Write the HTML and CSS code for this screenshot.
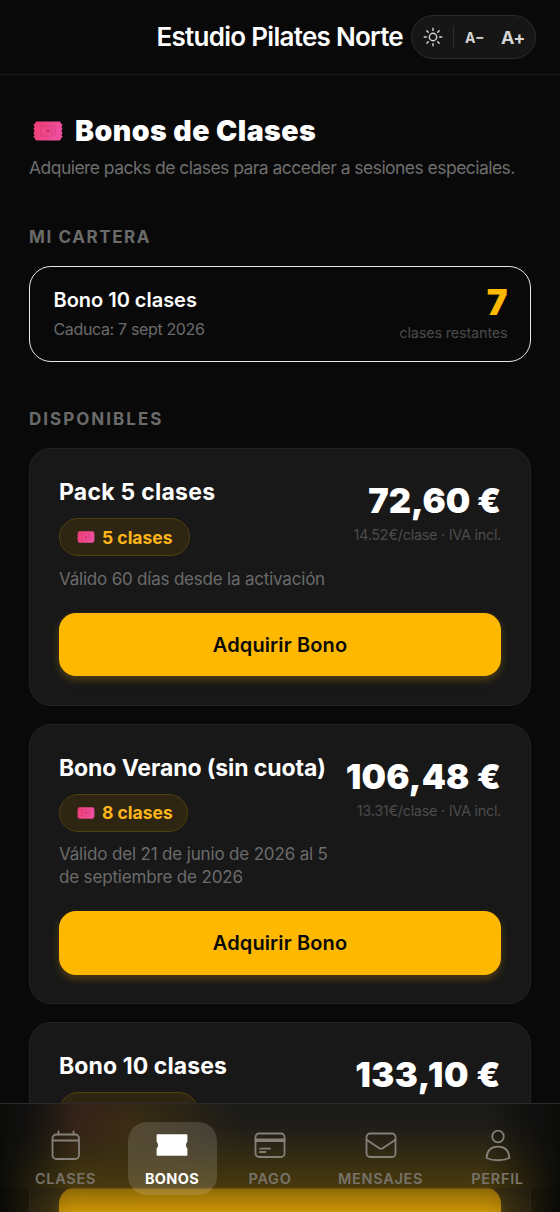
FILE: index.html
```html
<!DOCTYPE html>
<html lang="es">
<head>
<meta charset="utf-8">
<title>Bonos de Clases</title>
<link rel="stylesheet" href="styles.css">
</head>
<body>
<svg class="defs" width="0" height="0">
  <defs>
    <linearGradient id="pink" x1="0" y1="0" x2="1" y2="0.3"><stop offset="0" stop-color="#ee3d70"/><stop offset="1" stop-color="#f050a0"/></linearGradient>
    <symbol id="ticket" viewBox="0 0 30 20">
      <path fill="url(#pink)" d="M3 0.5H27L28 2.5L29.5 3.5L28.5 6L29.5 7.5L28.5 10L29.5 12L28.5 14L29.5 16L28 17.5L27 19.5H3L2 17.5L.5 16L1.5 14L.5 12L1.5 10L.5 7.5L1.5 6L.5 3.5L2 2.5Z"/>
      <path fill="none" stroke="#b92d68" stroke-opacity=".4" stroke-width=".8" d="M8 5H19V15H8ZM22 5V15"/>
      <circle cx="15" cy="10" r="1.5" fill="#a92759" fill-opacity=".7"/>
    </symbol>
  </defs>
</svg>
<div class="screen">
  <header class="topbar">
    <div class="brand"><span>Estudio Pilates Norte</span></div>
    <div class="controls">
      <svg class="sun" viewBox="0 0 20 20"><circle cx="10" cy="10" r="3.7"/><path d="M10 1.2V3.4M10 16.6V18.8M1.2 10H3.4M16.6 10H18.8M3.8 3.8L5.3 5.3M14.7 14.7L16.2 16.2M3.8 16.2L5.3 14.7M14.7 5.3L16.2 3.8"/></svg>
      <i class="divider"></i>
      <span class="smaller">A−</span>
      <span class="larger">A+</span>
    </div>
  </header>
  <main>
    <h1><svg class="ticket-lg"><use href="#ticket"/></svg><span>Bonos de Clases</span></h1>
    <p class="intro"><span>Adquiere packs de clases para acceder a sesiones especiales.</span></p>
    <h2 class="wallet-label"><span>MI CARTERA</span></h2>
    <section class="wallet">
      <div>
        <div class="wallet-name"><span>Bono 10 clases</span></div>
        <div class="wallet-date"><span>Caduca: 7 sept 2026</span></div>
      </div>
      <div class="wallet-right">
        <div class="count">7</div>
        <div class="remaining"><span>clases restantes</span></div>
      </div>
    </section>
    <h2 class="available-label"><span>DISPONIBLES</span></h2>
    <div class="packs">
      <article class="pack">
        <div class="pack-top">
          <div class="info">
            <h3><span>Pack 5 clases</span></h3>
            <div class="pill"><svg><use href="#ticket"/></svg><span>5 clases</span></div>
            <p><span>Válido 60 días desde la activación</span></p>
          </div>
          <div class="cost"><div class="price">72,60 €</div><div class="unit">14.52€/clase · IVA incl.</div></div>
        </div>
        <button>Adquirir Bono</button>
      </article>
      <article class="pack summer">
        <div class="pack-top">
          <div class="info">
            <h3><span>Bono Verano (sin cuota)</span></h3>
            <div class="pill"><svg><use href="#ticket"/></svg><span>8 clases</span></div>
            <p>Válido del 21 de junio de 2026 al 5<br>de septiembre de 2026</p>
          </div>
          <div class="cost"><div class="price">106,48 €</div><div class="unit">13.31€/clase · IVA incl.</div></div>
        </div>
        <button>Adquirir Bono</button>
      </article>
      <article class="pack ten">
        <div class="pack-top">
          <div class="info">
            <h3><span>Bono 10 clases</span></h3>
            <div class="pill"></div>
            <p></p>
          </div>
          <div class="cost"><div class="price">133,10 €</div></div>
        </div>
        <button></button>
      </article>
    </div>
  </main>
  <nav class="tabs">
    <a class="tab"><svg viewBox="0 0 32 32"><rect x="2.5" y="4.5" width="26.5" height="24.5" rx="4"/><path d="M2.5 10.5H29M8.5 1.3V4.5M23.5 1.3V4.5"/></svg><span>CLASES</span></a>
    <a class="tab active"><svg viewBox="0 0 32 32"><path d="M1.6 4.2H30.4Q31.4 4.2 31.4 5.2V11.4A5.2 5.2 0 0 0 31.4 18.6V24.8Q31.4 25.8 30.4 25.8H1.6Q.6 25.8 .6 24.8V18.6A5.2 5.2 0 0 0 .6 11.4V5.2Q.6 4.2 1.6 4.2Z"/></svg><span>BONOS</span></a>
    <a class="tab"><svg viewBox="0 0 32 32"><rect x="1.5" y="3.5" width="29" height="23.5" rx="3.5"/><path d="M1.5 9.5H30.5M1.5 11H30.5M6 18.7H16M6 22H11.5"/></svg><span>PAGO</span></a>
    <a class="tab tab-mail"><svg viewBox="0 0 32 32"><rect x="1.5" y="3.5" width="29" height="23.5" rx="3.5"/><path d="M1.5 9.8L14 18Q16 19.4 18 18L30.5 9.8"/></svg><span>MENSAJES</span></a>
    <a class="tab"><svg viewBox="0 0 32 32"><circle cx="16" cy="6.5" r="5.8"/><path d="M4.5 28C5 20.5 9.2 16.6 16 16.6S27 20.5 27.5 28C20.8 31 11.2 31 4.5 28Z"/></svg><span>PERFIL</span></a>
  </nav>
</div>
</body>
</html>
```
FILE: styles.css
```css
* { box-sizing: border-box; }
body { margin: 0; background: #090909; font-family: Inter, "Liberation Sans", sans-serif; color: #fff; overflow: hidden; }
h1, h2, h3, p { margin: 0; }
.defs { display: block; height: 0; }
.screen { position: relative; width: 560px; height: 1212px; overflow: hidden; white-space: nowrap; }
.topbar { height: 75px; border-bottom: 1px solid #181818; display: flex; align-items: center; justify-content: flex-end; padding-right: 24px; gap: 8px; }
.brand { font-size: 26px; line-height: 30px; font-weight: 600; letter-spacing: -.72px; }
.controls { width: 125px; height: 44px; border: 1px solid #2b2b2b; border-radius: 22px; background: #161616; display: flex; align-items: center; padding-left: 11px; color: #d4d4d4; font-weight: 700; }
.sun { width: 20px; height: 20px; fill: none; stroke: #d4d4d4; stroke-width: 1.4; stroke-linecap: round; }
.divider { width: 1px; height: 22px; background: #2d2d2d; margin: 0 11px 0 10px; }
.smaller { font-size: 14px; width: 36px; }
.larger { font-size: 18px; letter-spacing: -.5px; }
main { padding: 39px 29px 0; }
h1 { height: 34px; line-height: 34px; display: flex; align-items: center; font-size: 28.5px; font-weight: 900; letter-spacing: .45px; }
.ticket-lg { width: 30px; height: 20px; margin: 0 12px 0 4px; }
.intro { margin-top: 7px; line-height: 26px; font-size: 17.5px; color: #6e6e6e; letter-spacing: -.54px; }
h2 { height: 22px; line-height: 22px; font-size: 17px; font-weight: 700; letter-spacing: 2px; color: #6b6b6b; }
.wallet-label { margin-top: 45px; letter-spacing: 1.6px; }
.wallet { margin-top: 17.5px; height: 96px; border: 1.5px solid #e9e9e9; border-radius: 22px; padding: 19px 22.5px 0 23.5px; display: flex; justify-content: space-between; }
.wallet-name { font-size: 20px; line-height: 28px; font-weight: 600; letter-spacing: -.02px; }
.wallet-date { font-size: 16px; line-height: 30px; color: #6b6b6b; letter-spacing: -.35px; }
.wallet-right { text-align: right; }
.count { font-size: 35px; line-height: 32px; font-weight: 900; color: #ffb800; }
.remaining { font-size: 14.5px; line-height: 30px; color: #4b4b4b; letter-spacing: -.2px; }
.available-label { margin-top: 46.5px; }
.packs { margin-top: 18px; display: flex; flex-direction: column; gap: 18px; }
.pack { background: #181818; border: 1px solid #242424; border-radius: 22px; padding: 29px 29px 28.5px; }
.pack-top { display: flex; justify-content: space-between; }
h3 { line-height: 29.5px; font-size: 23px; font-weight: 700; letter-spacing: .25px; }
.summer h3 { letter-spacing: -.1px; }
.ten h3 { letter-spacing: .1px; }
.pill { display: flex; align-items: center; width: 130.5px; height: 38px; margin-top: 10.5px; padding-left: 17px; gap: 7px; border: 1.5px solid #4e400f; border-radius: 19px; background: #2e2613; color: #ffb51a; font-size: 17.5px; font-weight: 700; letter-spacing: 0; }
.summer .pill { width: 129px; }
.pill svg { width: 18px; height: 12px; }
.ten .pill { width: 139px; }
.info p { margin-top: 11.5px; min-height: 23px; line-height: 23px; font-size: 17px; color: #6b6b6b; letter-spacing: -.2px; }
.summer .info p { letter-spacing: -.16px; }
.price { margin-top: 2px; line-height: 42px; font-size: 34.5px; font-weight: 900; letter-spacing: -.1px; }
.summer .price { letter-spacing: .15px; }
.ten .price { letter-spacing: .5px; }
.unit { line-height: 26px; font-size: 14.5px; color: #4b4b4b; letter-spacing: -.3px; }
.cost { width: 0; display: flex; flex-direction: column; align-items: flex-end; }
button { display: block; width: 100%; height: 63.5px; margin-top: 22px; padding: 1px 0 0; border: 0; border-radius: 17px; background: #ffb800; color: #0a0a0a; font: 600 20px Inter, "Liberation Sans", sans-serif; letter-spacing: .12px; box-shadow: 0 4px 9px rgba(255,184,0,.25); }
.tabs { position: absolute; z-index: 1; left: 0; right: 0; bottom: 0; height: 109px; padding: 18px 20px 0 19.5px; border-top: 1px solid #2b2b29; display: grid; grid-template-columns: 92px 89px 75px 116px 84px; gap: 16px; align-content: start; }
/* Diffuse tint of the content passing under the bar, thinner along its lower edge */
.tabs::before {
  content: ""; position: absolute; z-index: -1; inset: 0;
  background:
    linear-gradient(90deg, #0b0b0a 0, rgba(11,11,10,.75) 20px, rgba(11,11,10,0) 75px, rgba(11,11,10,0) 485px, rgba(11,11,10,.75) 540px, #0b0b0a 560px),
    radial-gradient(ellipse 65px 55px at 82px 10px, rgba(70,32,32,.4), rgba(70,32,32,0)),
    radial-gradient(ellipse 110px 75px at 130px 22px, rgba(78,56,14,.6), rgba(78,56,14,0)),
    linear-gradient(#1c1c1b 0, #1f1d19 20px, #2e2816 45px, #41350f 68px, #4b3b0d 84px, #8a6808 108px);
  -webkit-mask-image: linear-gradient(rgba(0,0,0,.97) 84px, rgba(0,0,0,.64) 85px, rgba(0,0,0,.46) 108px);
  mask-image: linear-gradient(rgba(0,0,0,.97) 84px, rgba(0,0,0,.64) 85px, rgba(0,0,0,.46) 108px);
}
.tab { height: 73px; padding-top: 8px; border-radius: 19px; display: flex; flex-direction: column; align-items: center; color: #77736a; }
.tab svg { width: 32px; height: 32px; fill: none; stroke: #858078; stroke-width: 1.8; stroke-linecap: round; stroke-linejoin: round; }
.tab span { margin-top: 6.5px; font-size: 14.5px; line-height: 20px; font-weight: 600; letter-spacing: .7px; }
.tab-mail { margin: 0 1px 0 -1px; }
.active { background: rgba(255,255,255,.14); color: #fff; }
.active svg { fill: #fff; stroke: none; }
.active span { font-weight: 700; letter-spacing: .35px; }
```
